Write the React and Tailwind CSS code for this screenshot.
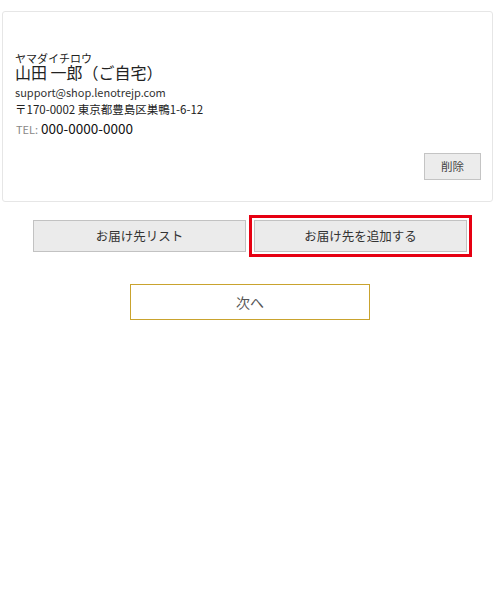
const font = { fontFamily: '"Noto Sans CJK JP", "Noto Sans", sans-serif' };

const AddressCard = () => {
  return (
    <div className="ml-[2px] mt-[11px] w-[491px] border border-[#e6e6e6] rounded-[3px] bg-white pt-[40px] pl-[12px] pr-[11px] pb-[21px] flex flex-col">
      <div className="text-[11px] leading-[12px] text-[#222]">ヤマダイチロウ</div>
      <div className="text-[16px] leading-[16px] text-[#222]">山田 一郎（ご自宅）</div>
      <div className="mt-[5px] text-[11px] leading-[14px] text-[#333]">support@shop.lenotrejp.com</div>
      <div className="mt-[3px] text-[11.5px] leading-[15px] text-[#222]">〒170-0002 東京都豊島区巣鴨1-6-12</div>
      <div className="mt-[2px] leading-[18px] text-[#111] flex items-baseline">
        <span className="text-[11px] text-[#888] mr-[3px] ml-[1px]">TEL:</span>
        <span className="text-[13.5px]">000-0000-0000</span>
      </div>
      <div className="mt-[15px] flex justify-end">
        <button className="w-[57px] h-[27px] bg-[#ececec] border border-[#c4c4c4] text-[11.5px] text-[#444]">
          削除
        </button>
      </div>
    </div>
  );
};

export default function App() {
  return (
    <div className="w-[500px] h-[600px] bg-white" style={font}>
      <AddressCard />
      <div className="mt-[18px] flex justify-center gap-[8px]">
        <button className="w-[213px] h-[32px] bg-[#ebebeb] border border-[#c2c2c2] text-[12.5px] text-[#333]">
          お届け先リスト
        </button>
        <button className="w-[213px] h-[32px] bg-[#ebebeb] border border-[#c2c2c2] text-[12.5px] text-[#333] outline-[3px] outline-solid outline-[#e60012] outline-offset-[2px]">
          お届け先を追加する
        </button>
      </div>
      <div className="mt-[32px] flex justify-center">
        <button className="w-[240px] h-[36px] bg-white border border-[#c9a32e] text-[14px] text-[#555]">
          次へ
        </button>
      </div>
    </div>
  );
}
